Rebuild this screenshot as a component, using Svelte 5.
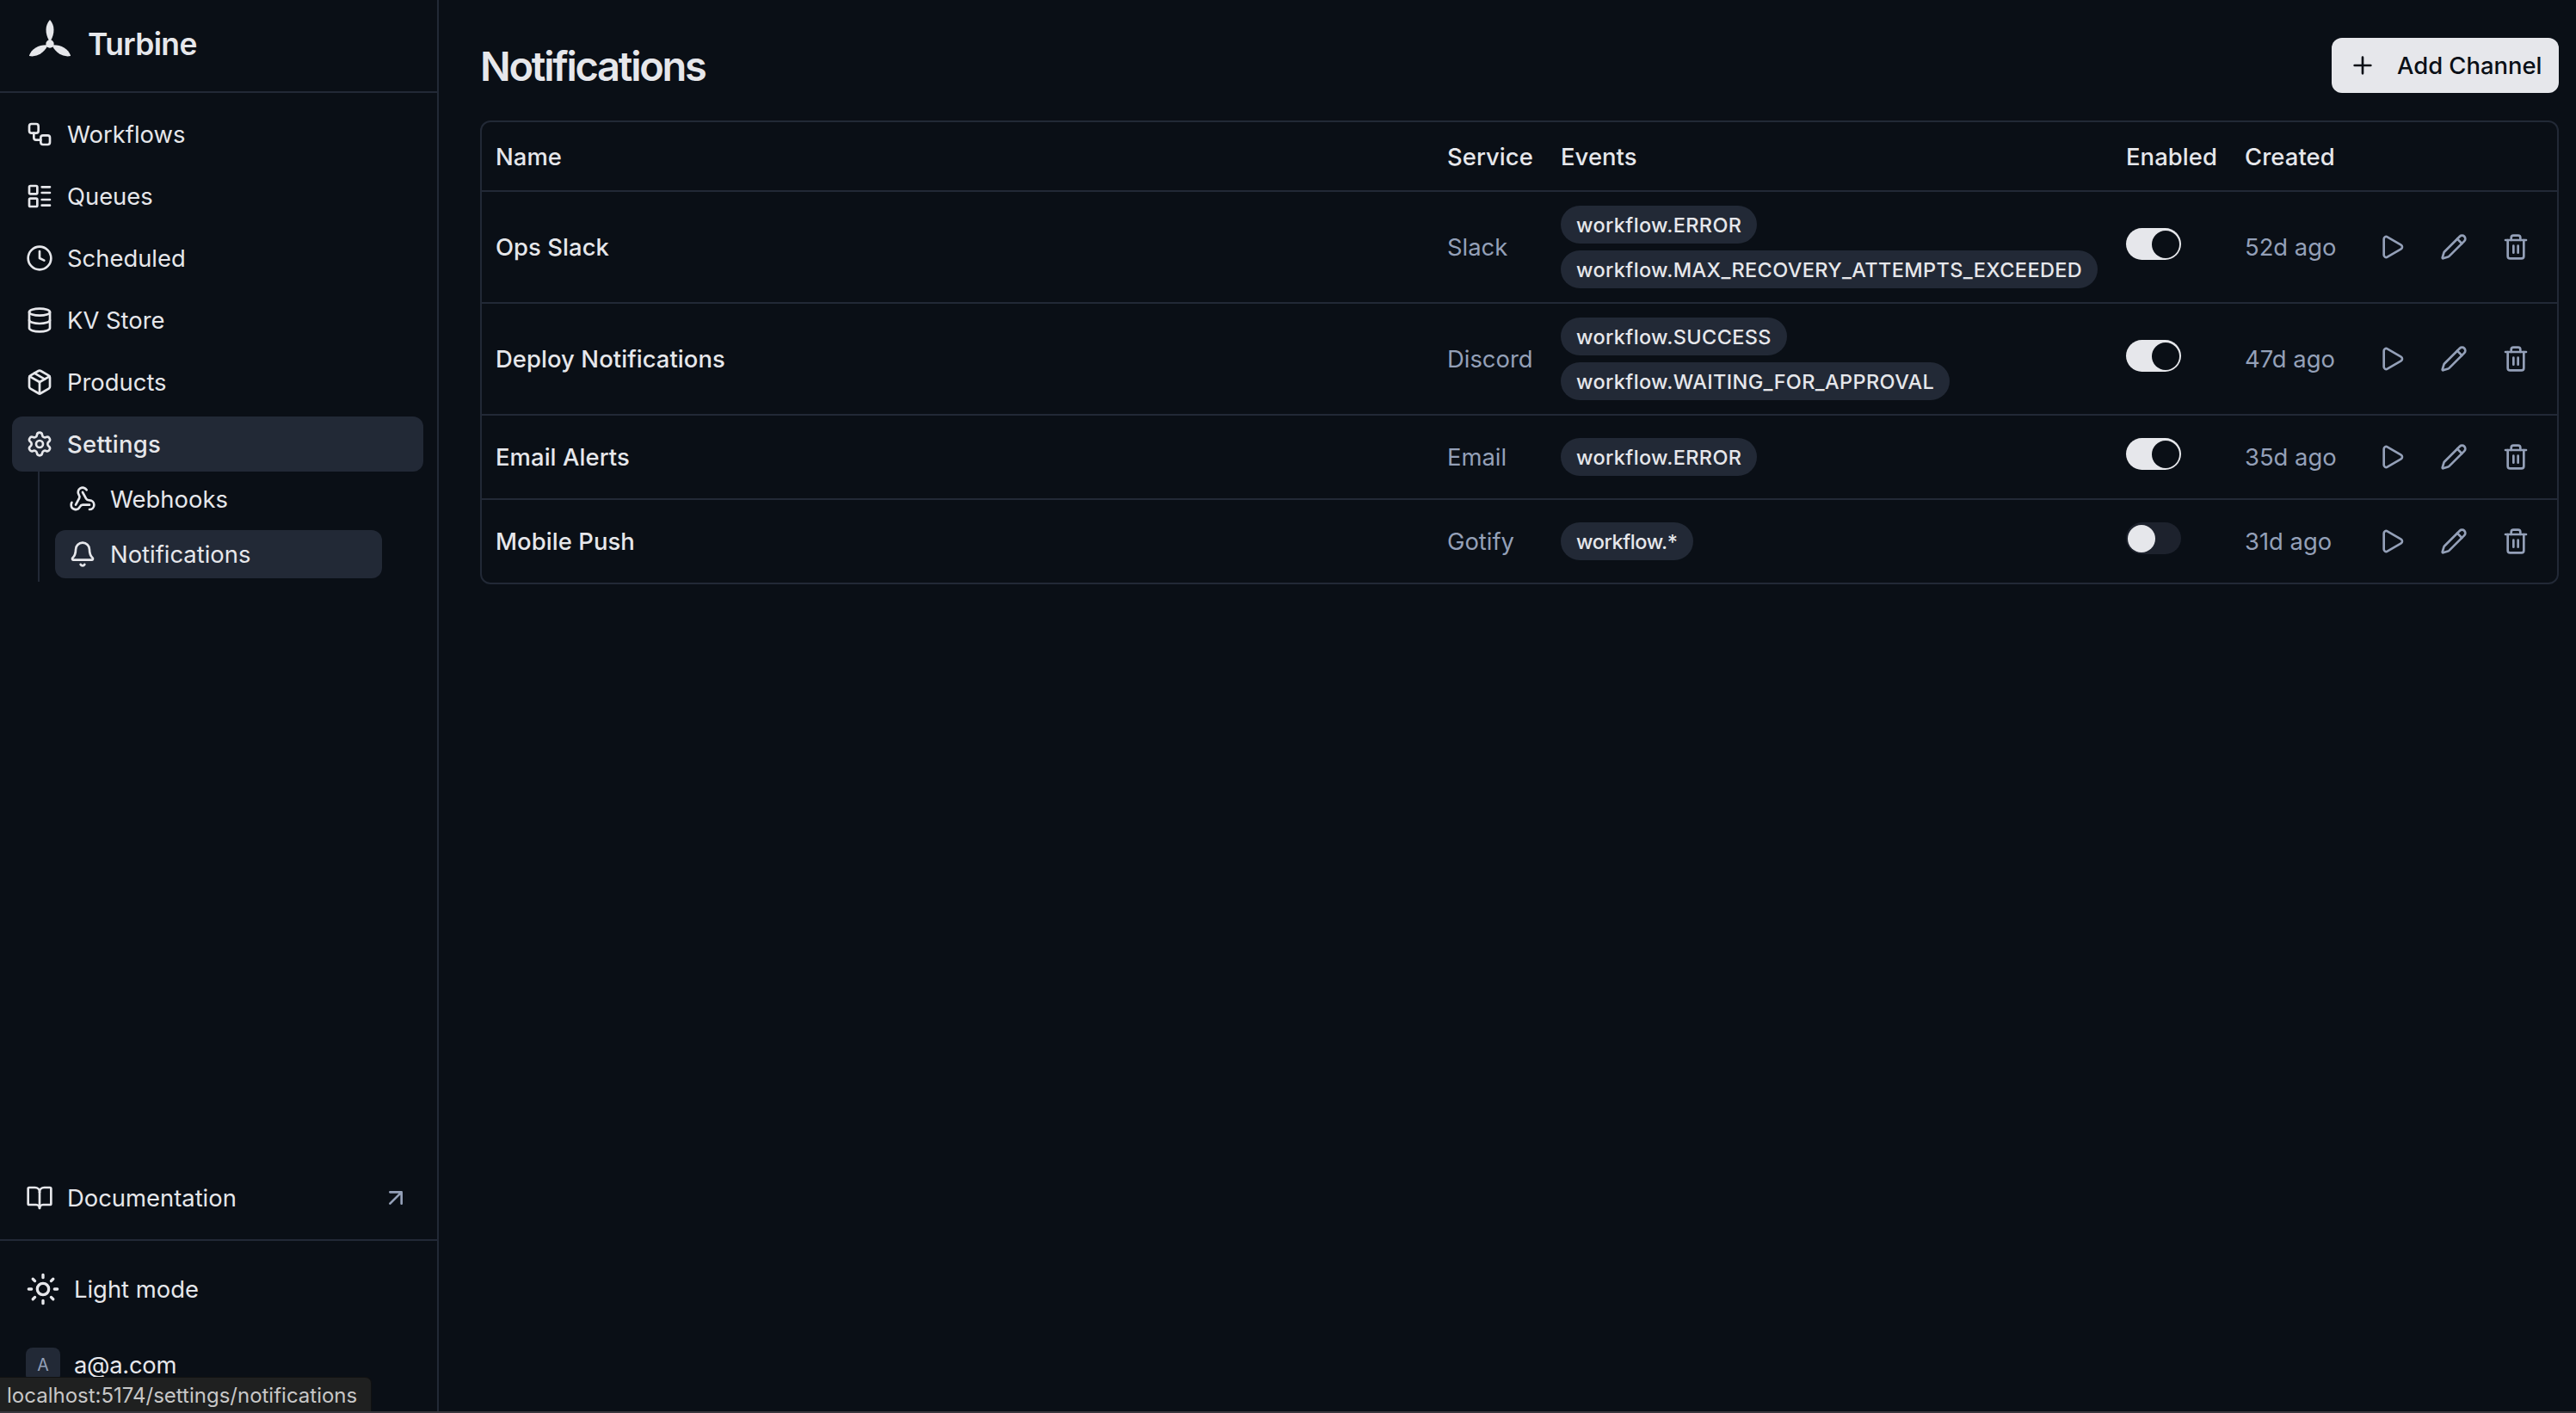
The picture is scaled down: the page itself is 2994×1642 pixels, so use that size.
<script lang="ts">
  type Channel = {
    name: string;
    service: string;
    events: string[];
    enabled: boolean;
    created: string;
  };

  const nav = [
    { label: 'Workflows', icon: 'workflow' },
    { label: 'Queues', icon: 'queues' },
    { label: 'Scheduled', icon: 'clock' },
    { label: 'KV Store', icon: 'database' },
    { label: 'Products', icon: 'package' },
    { label: 'Settings', icon: 'settings', active: true }
  ];

  const subnav = [
    { label: 'Webhooks', icon: 'webhook' },
    { label: 'Notifications', icon: 'bell', active: true }
  ];

  let channels: Channel[] = $state([
    {
      name: 'Ops Slack',
      service: 'Slack',
      events: ['workflow.ERROR', 'workflow.MAX_RECOVERY_ATTEMPTS_EXCEEDED'],
      enabled: true,
      created: '52d ago'
    },
    {
      name: 'Deploy Notifications',
      service: 'Discord',
      events: ['workflow.SUCCESS', 'workflow.WAITING_FOR_APPROVAL'],
      enabled: true,
      created: '47d ago'
    },
    {
      name: 'Email Alerts',
      service: 'Email',
      events: ['workflow.ERROR'],
      enabled: true,
      created: '35d ago'
    },
    {
      name: 'Mobile Push',
      service: 'Gotify',
      events: ['workflow.*'],
      enabled: false,
      created: '31d ago'
    }
  ]);
</script>

{#snippet icon(name: string)}
  <svg class="icon" class:large={name === 'sun'} viewBox="0 0 24 24" aria-hidden="true">
    {#if name === 'workflow'}
      <rect width="8" height="8" x="3" y="3" rx="2" />
      <path d="M7 11v4a2 2 0 0 0 2 2h4" />
      <rect width="8" height="8" x="13" y="13" rx="2" />
    {:else if name === 'queues'}
      <rect width="7" height="7" x="3" y="3" rx="1" />
      <rect width="7" height="7" x="3" y="14" rx="1" />
      <path d="M14 4h7M14 9h7M14 15h7M14 20h7" />
    {:else if name === 'clock'}
      <circle cx="12" cy="12" r="10" />
      <path d="M12 6v6l4 2" />
    {:else if name === 'database'}
      <ellipse cx="12" cy="5" rx="9" ry="3" />
      <path d="M3 5V19A9 3 0 0 0 21 19V5" />
      <path d="M3 12A9 3 0 0 0 21 12" />
    {:else if name === 'package'}
      <path d="M11 21.73a2 2 0 0 0 2 0l7-4A2 2 0 0 0 21 16V8a2 2 0 0 0-1-1.73l-7-4a2 2 0 0 0-2 0l-7 4A2 2 0 0 0 3 8v8a2 2 0 0 0 1 1.73z" />
      <path d="M12 22V12" />
      <path d="M3.29 7 12 12l8.71-5" />
      <path d="m7.5 4.27 9 5.15" />
    {:else if name === 'settings'}
      <path d="M9.671 4.136a2.34 2.34 0 0 1 4.659 0 2.34 2.34 0 0 0 3.319 1.915 2.34 2.34 0 0 1 2.33 4.033 2.34 2.34 0 0 0 0 3.831 2.34 2.34 0 0 1-2.33 4.033 2.34 2.34 0 0 0-3.319 1.915 2.34 2.34 0 0 1-4.659 0 2.34 2.34 0 0 0-3.32-1.915 2.34 2.34 0 0 1-2.33-4.033 2.34 2.34 0 0 0 0-3.831A2.34 2.34 0 0 1 6.35 6.051a2.34 2.34 0 0 0 3.319-1.915" />
      <circle cx="12" cy="12" r="3" />
    {:else if name === 'webhook'}
      <path d="M18 16.98h-5.99c-1.1 0-1.95.94-2.48 1.9A4 4 0 0 1 2 17c.01-.7.2-1.4.57-2" />
      <path d="m6 17 3.13-5.78c.53-.97.1-2.18-.5-3.1a4 4 0 1 1 6.89-4.06" />
      <path d="m12 6 3.13 5.73C15.66 12.7 16.9 13 18 13a4 4 0 0 1 0 8" />
    {:else if name === 'bell'}
      <path d="M10.268 21a2 2 0 0 0 3.464 0" />
      <path d="M3.262 15.326A1 1 0 0 0 4 17h16a1 1 0 0 0 .74-1.673C19.41 13.956 18 12.499 18 8A6 6 0 0 0 6 8c0 4.499-1.411 5.956-2.738 7.326" />
    {:else if name === 'book'}
      <path d="M12 7v14" />
      <path d="M3 18a1 1 0 0 1-1-1V4a1 1 0 0 1 1-1h5a4 4 0 0 1 4 4 4 4 0 0 1 4-4h5a1 1 0 0 1 1 1v13a1 1 0 0 1-1 1h-6a3 3 0 0 0-3 3 3 3 0 0 0-3-3z" />
    {:else if name === 'arrow'}
      <path d="M7 7h10v10M7 17 17 7" />
    {:else if name === 'sun'}
      <circle cx="12" cy="12" r="4" />
      <path d="M12 2v2M12 20v2M4.93 4.93l1.41 1.41M17.66 17.66l1.41 1.41M2 12h2M20 12h2M6.34 17.66l-1.41 1.41M19.07 4.93l-1.41 1.41" />
    {:else if name === 'plus'}
      <path d="M5 12h14M12 5v14" />
    {:else if name === 'play'}
      <path d="M5 5a2 2 0 0 1 3.008-1.728l11.997 6.998a2 2 0 0 1 .003 3.458l-12 7A2 2 0 0 1 5 19z" />
    {:else if name === 'pencil'}
      <path d="M21.174 6.812a1 1 0 0 0-3.986-3.987L3.842 16.174a2 2 0 0 0-.5.83l-1.321 4.352a.5.5 0 0 0 .623.622l4.353-1.32a2 2 0 0 0 .83-.497z" />
      <path d="m15 5 4 4" />
    {:else if name === 'trash'}
      <path d="M10 11v6M14 11v6" />
      <path d="M19 6v14a2 2 0 0 1-2 2H7a2 2 0 0 1-2-2V6" />
      <path d="M3 6h18" />
      <path d="M8 6V4a2 2 0 0 1 2-2h4a2 2 0 0 1 2 2v2" />
    {/if}
  </svg>
{/snippet}

<div class="app">
  <aside class="sidebar">
    <div class="brand">
      <svg class="logo" viewBox="0 0 48 48" aria-hidden="true">
        <circle cx="24" cy="28" r="4.7" />
        <path d="M24 0C18.2 6 18.2 16 23 24h2C29.8 16 29.8 6 24 0z" />
        <path d="M24 0C18.2 6 18.2 16 23 24h2C29.8 16 29.8 6 24 0z" transform="rotate(120 24 28)" />
        <path d="M24 0C18.2 6 18.2 16 23 24h2C29.8 16 29.8 6 24 0z" transform="rotate(240 24 28)" />
      </svg>
      <span>Turbine</span>
    </div>

    <nav class="nav">
      {#each nav as item}
        <a class="nav-item" class:active={item.active} href="#{item.icon}">
          {@render icon(item.icon)}
          <span>{item.label}</span>
        </a>
      {/each}
    </nav>
    <div class="subnav">
      {#each subnav as item}
        <a class="sub-item" class:active={item.active} href="#{item.icon}">
          {@render icon(item.icon)}
          <span>{item.label}</span>
        </a>
      {/each}
    </div>

    <div class="docs">
      <a class="nav-item" href="#docs">
        {@render icon('book')}
        <span class="grow">Documentation</span>
        <span class="muted">{@render icon('arrow')}</span>
      </a>
    </div>

    <div class="account">
      <button class="account-row">
        {@render icon('sun')}
        <span>Light mode</span>
      </button>
      <button class="account-row">
        <span class="avatar">A</span>
        <span class="email">a@a.com</span>
      </button>
    </div>
  </aside>

  <main>
    <header>
      <h1>Notifications</h1>
      <button class="add">
        {@render icon('plus')}
        <span>Add Channel</span>
      </button>
    </header>

    <div class="table">
      <div class="row head">
        <span>Name</span>
        <span>Service</span>
        <span>Events</span>
        <span>Enabled</span>
        <span>Created</span>
        <span></span>
      </div>
      {#each channels as channel}
        <div class="row">
          <span class="name">{channel.name}</span>
          <span class="muted">{channel.service}</span>
          <div class="events">
            {#each channel.events as event}
              <span class="badge" class:wildcard={event.endsWith('*')}>{event}</span>
            {/each}
          </div>
          <div>
            <button
              class="switch"
              class:on={channel.enabled}
              role="switch"
              aria-checked={channel.enabled}
              aria-label="Enabled"
              onclick={() => (channel.enabled = !channel.enabled)}
            >
              <span class="thumb"></span>
            </button>
          </div>
          <span class="muted">{channel.created}</span>
          <div class="actions">
            <button aria-label="Test">{@render icon('play')}</button>
            <button aria-label="Edit">{@render icon('pencil')}</button>
            <button aria-label="Delete">{@render icon('trash')}</button>
          </div>
        </div>
      {/each}
    </div>
  </main>

  <div class="status">localhost:5174/settings/notifications</div>
</div>

<style>
  :global(body) {
    background: #0a0f16;
  }

  .app {
    --line: #222936;
    --accent: #222936;
    --fg: #e6e7eb;
    --dim: #94a0b8;
    position: relative;
    box-sizing: border-box;
    display: flex;
    height: 1642px;
    overflow: hidden;
    border-bottom: 2px solid #37363d;
    background: #0a0f16;
    color: var(--fg);
    font-family: Inter, 'Liberation Sans', sans-serif;
    font-size: 27.4px;
    line-height: 40px;
  }

  .app :global(*) {
    box-sizing: border-box;
  }

  button {
    padding: 0;
    border: 0;
    background: none;
    color: inherit;
    font: inherit;
    letter-spacing: inherit;
  }

  a {
    color: inherit;
    text-decoration: none;
  }

  .icon {
    display: block;
    flex: none;
    width: 32px;
    height: 32px;
    fill: none;
    stroke: currentColor;
    stroke-width: 2;
    stroke-linecap: round;
    stroke-linejoin: round;
  }

  .icon.large {
    width: 40px;
    height: 40px;
  }

  .muted {
    color: var(--dim);
  }

  .sidebar {
    display: flex;
    flex-direction: column;
    flex: none;
    width: 510px;
    height: 1642px;
    border-right: 2px solid var(--line);
  }

  .brand {
    display: flex;
    align-items: flex-start;
    gap: 20px;
    height: 108px;
    padding: 23px 34px 0;
    border-bottom: 2px solid var(--line);
    font-size: 35.4px;
    font-weight: 600;
    letter-spacing: -0.6px;
    line-height: 57px;
  }

  .logo {
    width: 48px;
    height: 48px;
    fill: currentColor;
  }

  .nav {
    display: flex;
    flex-direction: column;
    gap: 8px;
    padding: 16px 16px 0 14px;
  }

  .nav-item,
  .sub-item {
    display: flex;
    align-items: center;
    gap: 16px;
    height: 64px;
    padding: 0 16px;
    border-radius: 12px;
  }

  .nav-item.active {
    background: var(--accent);
    font-weight: 500;
    letter-spacing: 0.3px;
  }

  .subnav {
    display: flex;
    flex-direction: column;
    gap: 8px;
    margin: 0 64px 0 44px;
    padding: 4px 0 4px 18px;
    border-left: 2px solid var(--line);
  }

  .sub-item {
    height: 56px;
  }

  .sub-item.active {
    background: var(--accent);
  }

  .grow {
    flex: 1;
  }

  .docs {
    margin-top: auto;
    padding: 0 16px 16px 14px;
  }

  .account {
    display: flex;
    flex-direction: column;
    gap: 24px;
    height: 202px;
    padding: 24px 14px 0;
    border-top: 2px solid var(--line);
  }

  .account-row {
    display: flex;
    flex: none;
    align-items: center;
    gap: 16px;
    height: 64px;
    padding: 0 16px;
  }

  .email {
    letter-spacing: -0.3px;
  }

  .avatar {
    width: 40px;
    height: 40px;
    border-radius: 8px;
    background: var(--accent);
    color: var(--dim);
    font-size: 19.6px;
    text-align: center;
  }

  main {
    flex: 1;
    padding: 44px 20px 0 48px;
  }

  header {
    display: flex;
    align-items: center;
    justify-content: space-between;
    height: 64px;
    margin-bottom: 32px;
  }

  h1 {
    margin: 0;
    padding-top: 2px;
    font-size: 47px;
    font-weight: 600;
    letter-spacing: -0.048em;
  }

  .add {
    display: flex;
    align-items: center;
    gap: 24px;
    width: 264px;
    height: 64px;
    padding: 0 20px;
    border-radius: 12px;
    background: var(--fg);
    color: #0a0f16;
    font-weight: 500;
    white-space: nowrap;
  }

  .table {
    border: 2px solid var(--line);
    border-radius: 12px;
  }

  .row {
    display: grid;
    grid-template-columns: 1106px 132px 657px 138px 139px 240px;
    align-items: center;
    padding: 16px 0;
    border-bottom: 2px solid var(--line);
    white-space: nowrap;
  }

  .row:last-child {
    border-bottom: 0;
  }

  .row > * {
    padding: 0 0 0 16px;
  }

  .head {
    height: 81px;
    padding: 0;
  }

  .head,
  .name {
    font-weight: 500;
    letter-spacing: 0.08px;
  }

  .events {
    display: flex;
    flex-direction: column;
    align-items: flex-start;
    gap: 8px;
  }

  .badge {
    height: 44px;
    padding: 0 18px;
    border-radius: 22px;
    background: var(--accent);
    font-size: 23.5px;
    font-weight: 500;
    letter-spacing: 0.37px;
    line-height: 45px;
  }

  .badge.wildcard {
    letter-spacing: -0.4px;
  }

  .switch {
    display: flex;
    align-items: center;
    width: 64px;
    height: 37px;
    margin-bottom: 7px;
    padding: 0 2px;
    border-radius: 19px;
    background: #1d222d;
    vertical-align: top;
  }

  .thumb {
    width: 32px;
    height: 32px;
    border-radius: 50%;
    background: var(--fg);
  }

  .switch.on {
    justify-content: flex-end;
    background: var(--fg);
  }

  .switch.on .thumb {
    background: #0a0f16;
  }

  .actions {
    display: flex;
    gap: 8px;
    color: var(--dim);
  }

  .actions button {
    display: grid;
    place-items: center;
    width: 64px;
    height: 64px;
  }

  /* browser link preview, floats over the sidebar footer */
  .status {
    position: absolute;
    left: 0;
    bottom: -2px;
    width: 432px;
    height: 42px;
    padding-left: 8px;
    border: solid #111;
    border-width: 1px 1px 0 0;
    border-top-right-radius: 7px;
    background: #1f2020;
    color: #c7c7c7;
    font-size: 24px;
    line-height: 41px;
    white-space: nowrap;
  }
</style>
